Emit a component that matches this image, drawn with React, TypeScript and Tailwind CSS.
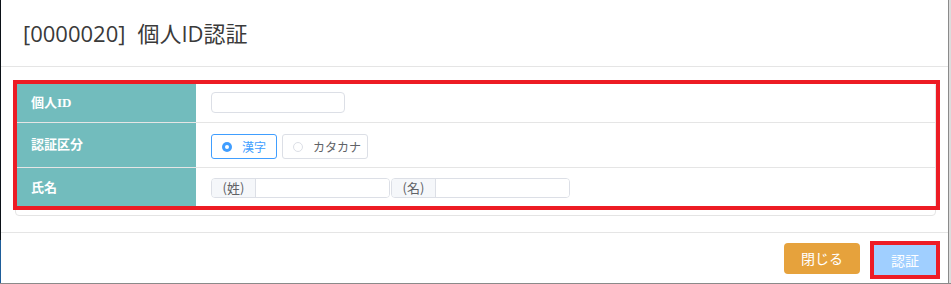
import React from "react";

const JP = '"Noto Sans CJK JP", "Noto Sans", sans-serif';

function Label({ children }: { children: React.ReactNode }) {
  return (
    <div
      className="w-[180px] shrink-0 bg-[#72bcbd] flex items-center pl-[15px] text-white text-[13px] font-bold"
      style={{ fontFamily: '"Liberation Serif", "Noto Sans CJK JP", serif' }}
    >
      {children}
    </div>
  );
}

function NameGroup({ label }: { label: string }) {
  return (
    <div className="flex w-[179px] h-[20px] border border-[#dcdfe6] rounded-[4px] overflow-hidden">
      <div className="w-[44px] shrink-0 bg-[#f5f7fa] border-r border-[#dcdfe6] flex items-center justify-center text-[13px] text-[#606266]">
        {label}
      </div>
      <div className="flex-1 bg-white" />
    </div>
  );
}

export default function App() {
  return (
    <div className="w-[951px] h-[284px] flex flex-col bg-white overflow-hidden" style={{ fontFamily: JP }}>
      <div className="flex h-[283px]">
        <div className="w-px flex flex-col">
          <div className="h-[240px] bg-[#0b1117]" />
          <div className="flex-1 bg-[#1e5d9a]" />
        </div>
        <div className="w-[947px] flex flex-col bg-white">
          <div
            className="h-[67px] border-b border-[#e5e5e5] flex items-center pl-[22px] text-[22px] text-[#3a3a3a]"
            style={{ fontFamily: '"Open Sans", "Noto Sans CJK JP", sans-serif' }}
          >
            <span>[0000020]</span>
            <span className="ml-[12px]">個人ID認証</span>
          </div>
          <div className="pt-[15px] pb-[16px] pl-[14px] pr-[12px]">
            <div className="relative border border-[#e4e4e4] rounded-[4px] pb-[8px]">
              <div className="flex h-[40px] border-b border-[#e5e5e5]">
                <Label>個人ID</Label>
                <div className="flex-1 flex items-center pl-[15px]">
                  <div className="w-[134px] h-[21px] border border-[#dcdfe6] rounded-[4px]" />
                </div>
              </div>
              <div className="flex h-[45px] border-b border-[#e5e5e5]">
                <Label>認証区分</Label>
                <div className="flex-1 flex items-center pl-[15px] gap-[5px] pt-[3px]">
                  <div className="w-[66px] h-[25px] border border-[#409eff] rounded-[3px] flex items-center pl-[10px] gap-[10px] text-[12px] text-[#409eff]">
                    <span className="w-[10px] h-[10px] rounded-full bg-[#409eff] flex items-center justify-center">
                      <span className="w-[4px] h-[4px] rounded-full bg-white" />
                    </span>
                    <span>漢字</span>
                  </div>
                  <div className="w-[86px] h-[25px] border border-[#dcdfe6] rounded-[3px] flex items-center pl-[10px] gap-[10px] text-[12px] text-[#606266]">
                    <span className="w-[10px] h-[10px] rounded-full border border-[#dcdfe6] bg-white" />
                    <span>カタカナ</span>
                  </div>
                </div>
              </div>
              <div className="flex h-[39px]">
                <Label>氏名</Label>
                <div className="flex-1 flex items-center pl-[15px] gap-[1px]">
                  <NameGroup label="(姓)" />
                  <NameGroup label="(名)" />
                </div>
              </div>
              <div className="absolute -left-[3px] -top-[3px] -right-[5px] bottom-[5px] border-4 border-[#ed1c24] pointer-events-none" />
            </div>
          </div>
          <div className="flex-1 border-t border-[#e5e5e5] flex items-center justify-end pr-[8px] gap-[10px]">
            <button className="w-[76px] h-[31px] rounded-[4px] bg-[#e6a23c] text-white text-[14px]">閉じる</button>
            <div className="border-4 border-[#ed1c24] mt-[4px]">
              <button className="w-[62px] h-[30px] bg-[#a0cfff] text-white text-[14px] block">認証</button>
            </div>
          </div>
        </div>
        <div className="w-px bg-[#8a8a8a]" />
        <div className="w-[2px] bg-[#dcdcdc]" />
      </div>
      <div className="h-px bg-[#8a8a8a]" />
    </div>
  );
}
